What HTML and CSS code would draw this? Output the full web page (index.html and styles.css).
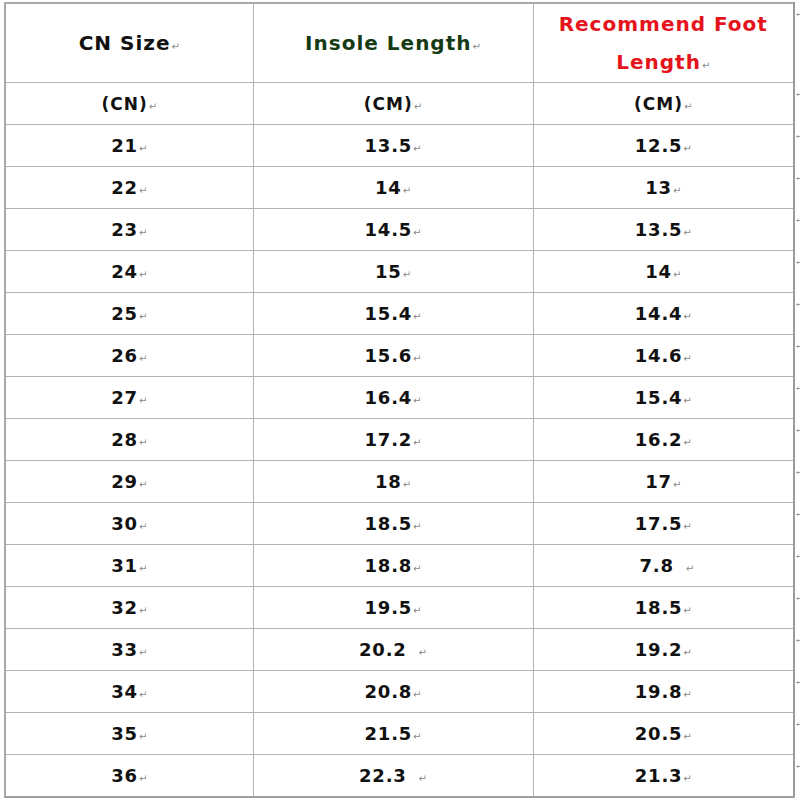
FILE: index.html
```html
<!DOCTYPE html>
<html>
<head>
<meta charset="utf-8">
<link rel="stylesheet" href="styles.css">
</head>
<body>
<table class="size-table">
  <colgroup>
    <col class="c1"><col class="c2"><col class="c3"><col class="c4">
  </colgroup>
  <tr class="head">
    <td>CN Size<span class="ret">↵</span></td>
    <td class="green">Insole Length<span class="ret">↵</span></td>
    <td class="red two">Recommend Foot<br>Length<span class="ret">↵</span></td>
    <td class="mark"><svg class="mk" width="5" height="5" viewBox="0 0 5 5"><path d="M4.5 0.5V2.5H0.8M2 1.3L0.8 2.5L2 3.7" fill="none" stroke="#8a8a8a" stroke-width="0.9"/></svg></td>
  </tr>
  <tr>
    <td class="unit">(CN)<span class="ret">↵</span></td>
    <td class="unit">(CM)<span class="ret">↵</span></td>
    <td class="unit">(CM)<span class="ret">↵</span></td>
    <td class="mark"><svg class="mk" width="5" height="5" viewBox="0 0 5 5"><path d="M4.5 0.5V2.5H0.8M2 1.3L0.8 2.5L2 3.7" fill="none" stroke="#8a8a8a" stroke-width="0.9"/></svg></td>
  </tr>
  <tr><td>21<span class="ret">↵</span></td><td>13.5<span class="ret">↵</span></td><td>12.5<span class="ret">↵</span></td><td class="mark"><svg class="mk" width="5" height="5" viewBox="0 0 5 5"><path d="M4.5 0.5V2.5H0.8M2 1.3L0.8 2.5L2 3.7" fill="none" stroke="#8a8a8a" stroke-width="0.9"/></svg></td></tr>
  <tr><td>22<span class="ret">↵</span></td><td>14<span class="ret">↵</span></td><td>13<span class="ret">↵</span></td><td class="mark"><svg class="mk" width="5" height="5" viewBox="0 0 5 5"><path d="M4.5 0.5V2.5H0.8M2 1.3L0.8 2.5L2 3.7" fill="none" stroke="#8a8a8a" stroke-width="0.9"/></svg></td></tr>
  <tr><td>23<span class="ret">↵</span></td><td>14.5<span class="ret">↵</span></td><td>13.5<span class="ret">↵</span></td><td class="mark"><svg class="mk" width="5" height="5" viewBox="0 0 5 5"><path d="M4.5 0.5V2.5H0.8M2 1.3L0.8 2.5L2 3.7" fill="none" stroke="#8a8a8a" stroke-width="0.9"/></svg></td></tr>
  <tr><td>24<span class="ret">↵</span></td><td>15<span class="ret">↵</span></td><td>14<span class="ret">↵</span></td><td class="mark"><svg class="mk" width="5" height="5" viewBox="0 0 5 5"><path d="M4.5 0.5V2.5H0.8M2 1.3L0.8 2.5L2 3.7" fill="none" stroke="#8a8a8a" stroke-width="0.9"/></svg></td></tr>
  <tr><td>25<span class="ret">↵</span></td><td>15.4<span class="ret">↵</span></td><td>14.4<span class="ret">↵</span></td><td class="mark"><svg class="mk" width="5" height="5" viewBox="0 0 5 5"><path d="M4.5 0.5V2.5H0.8M2 1.3L0.8 2.5L2 3.7" fill="none" stroke="#8a8a8a" stroke-width="0.9"/></svg></td></tr>
  <tr><td>26<span class="ret">↵</span></td><td>15.6<span class="ret">↵</span></td><td>14.6<span class="ret">↵</span></td><td class="mark"><svg class="mk" width="5" height="5" viewBox="0 0 5 5"><path d="M4.5 0.5V2.5H0.8M2 1.3L0.8 2.5L2 3.7" fill="none" stroke="#8a8a8a" stroke-width="0.9"/></svg></td></tr>
  <tr><td>27<span class="ret">↵</span></td><td>16.4<span class="ret">↵</span></td><td>15.4<span class="ret">↵</span></td><td class="mark"><svg class="mk" width="5" height="5" viewBox="0 0 5 5"><path d="M4.5 0.5V2.5H0.8M2 1.3L0.8 2.5L2 3.7" fill="none" stroke="#8a8a8a" stroke-width="0.9"/></svg></td></tr>
  <tr><td>28<span class="ret">↵</span></td><td>17.2<span class="ret">↵</span></td><td>16.2<span class="ret">↵</span></td><td class="mark"><svg class="mk" width="5" height="5" viewBox="0 0 5 5"><path d="M4.5 0.5V2.5H0.8M2 1.3L0.8 2.5L2 3.7" fill="none" stroke="#8a8a8a" stroke-width="0.9"/></svg></td></tr>
  <tr><td>29<span class="ret">↵</span></td><td>18<span class="ret">↵</span></td><td>17<span class="ret">↵</span></td><td class="mark"><svg class="mk" width="5" height="5" viewBox="0 0 5 5"><path d="M4.5 0.5V2.5H0.8M2 1.3L0.8 2.5L2 3.7" fill="none" stroke="#8a8a8a" stroke-width="0.9"/></svg></td></tr>
  <tr><td>30<span class="ret">↵</span></td><td>18.5<span class="ret">↵</span></td><td>17.5<span class="ret">↵</span></td><td class="mark"><svg class="mk" width="5" height="5" viewBox="0 0 5 5"><path d="M4.5 0.5V2.5H0.8M2 1.3L0.8 2.5L2 3.7" fill="none" stroke="#8a8a8a" stroke-width="0.9"/></svg></td></tr>
  <tr><td>31<span class="ret">↵</span></td><td>18.8<span class="ret">↵</span></td><td>&nbsp;7.8<span class="ret gap">↵</span></td><td class="mark"><svg class="mk" width="5" height="5" viewBox="0 0 5 5"><path d="M4.5 0.5V2.5H0.8M2 1.3L0.8 2.5L2 3.7" fill="none" stroke="#8a8a8a" stroke-width="0.9"/></svg></td></tr>
  <tr><td>32<span class="ret">↵</span></td><td>19.5<span class="ret">↵</span></td><td>18.5<span class="ret">↵</span></td><td class="mark"><svg class="mk" width="5" height="5" viewBox="0 0 5 5"><path d="M4.5 0.5V2.5H0.8M2 1.3L0.8 2.5L2 3.7" fill="none" stroke="#8a8a8a" stroke-width="0.9"/></svg></td></tr>
  <tr><td>33<span class="ret">↵</span></td><td>20.2<span class="ret gap">↵</span></td><td>19.2<span class="ret">↵</span></td><td class="mark"><svg class="mk" width="5" height="5" viewBox="0 0 5 5"><path d="M4.5 0.5V2.5H0.8M2 1.3L0.8 2.5L2 3.7" fill="none" stroke="#8a8a8a" stroke-width="0.9"/></svg></td></tr>
  <tr><td>34<span class="ret">↵</span></td><td>20.8<span class="ret">↵</span></td><td>19.8<span class="ret">↵</span></td><td class="mark"><svg class="mk" width="5" height="5" viewBox="0 0 5 5"><path d="M4.5 0.5V2.5H0.8M2 1.3L0.8 2.5L2 3.7" fill="none" stroke="#8a8a8a" stroke-width="0.9"/></svg></td></tr>
  <tr><td>35<span class="ret">↵</span></td><td>21.5<span class="ret">↵</span></td><td>20.5<span class="ret">↵</span></td><td class="mark"><svg class="mk" width="5" height="5" viewBox="0 0 5 5"><path d="M4.5 0.5V2.5H0.8M2 1.3L0.8 2.5L2 3.7" fill="none" stroke="#8a8a8a" stroke-width="0.9"/></svg></td></tr>
  <tr><td>36<span class="ret">↵</span></td><td>22.3<span class="ret gap">↵</span></td><td>21.3<span class="ret">↵</span></td><td class="mark"><svg class="mk" width="5" height="5" viewBox="0 0 5 5"><path d="M4.5 0.5V2.5H0.8M2 1.3L0.8 2.5L2 3.7" fill="none" stroke="#8a8a8a" stroke-width="0.9"/></svg></td></tr>
</table>
</body>
</html>
```
FILE: styles.css
```css
html, body {
  margin: 0;
  padding: 0;
  background: #ffffff;
}

.size-table {
  margin: 2px 0 0 4px;
  border-collapse: collapse;
  table-layout: fixed;
  width: 796px;
  font-family: "DejaVu Sans", sans-serif;
  font-weight: bold;
  color: #111111;
}

.c1 { width: 248px; }
.c2 { width: 280px; }
.c3 { width: 261px; }
.c4 { width: 7px; }

.size-table td {
  border: 1px solid #b4b4b4;
  height: 41px;
  padding: 0;
  text-align: center;
  vertical-align: middle;
  font-size: 18px;
  letter-spacing: 0.8px;
  line-height: 20px;
  white-space: nowrap;
}

.size-table tr:first-child td {
  border-top: 2px solid #a8a8a8;
}

.size-table td:first-child {
  border-left: 2px solid #a8a8a8;
}

.size-table td:nth-child(3) {
  border-right: 2px solid #9a9a9a;
}

.size-table tr:last-child td {
  border-bottom: 2px solid #a0a0a0;
}

.size-table .head td {
  height: 78px;
  font-size: 20px;
  letter-spacing: 1px;
}

.size-table .head td.two {
  line-height: 38px;
}

.size-table td.unit {
  font-size: 17px;
  letter-spacing: 1px;
}

.green { color: #143a14; }
.red { color: #e5141c; }

.ret {
  font-size: 10px;
  font-weight: normal;
  color: #8a8a8a;
  letter-spacing: 0;
  margin-left: 1px;
  line-height: 10px;
}

.ret.gap {
  margin-left: 12px;
}

.size-table td.mark {
  border: none;
  text-align: left;
  vertical-align: top;
  line-height: 0;
  padding: 9px 0 0 1px;
  height: auto;
}

.size-table tr:last-child td.mark,
.size-table tr:first-child td.mark {
  border: none;
}

.mk {
  display: block;
}
```
